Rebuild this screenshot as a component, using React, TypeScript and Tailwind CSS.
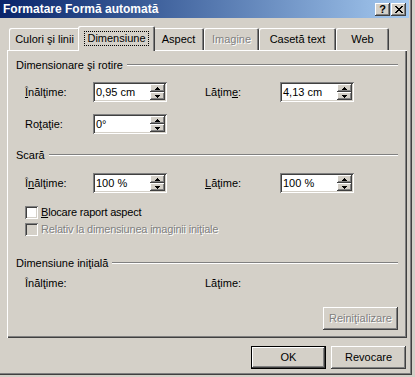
import React from "react";

const raised =
  "shadow-[inset_-1px_-1px_#404040,inset_1px_1px_#ffffff,inset_-2px_-2px_#808080,inset_2px_2px_#d4d0c8]";
const sunken =
  "shadow-[inset_1px_1px_#808080,inset_-1px_-1px_#ffffff,inset_2px_2px_#404040,inset_-2px_-2px_#d4d0c8]";
const disabledText = "text-[#808080] [text-shadow:1px_1px_0_#ffffff]";

function Arrow({ up }: { up: boolean }) {
  return (
    <svg width="5" height="3" viewBox="0 0 5 3" shapeRendering="crispEdges">
      {up ? (
        <g fill="#000">
          <rect x="2" y="0" width="1" height="1" />
          <rect x="1" y="1" width="3" height="1" />
          <rect x="0" y="2" width="5" height="1" />
        </g>
      ) : (
        <g fill="#000">
          <rect x="0" y="0" width="5" height="1" />
          <rect x="1" y="1" width="3" height="1" />
          <rect x="2" y="2" width="1" height="1" />
        </g>
      )}
    </svg>
  );
}

function Spin({ value }: { value: string }) {
  return (
    <div className={`w-[74px] h-[20px] bg-white ${sunken} p-[2px] flex`}>
      <div className="flex-1 pl-[1px] flex items-center leading-[13px] text-black">{value}</div>
      <div className="w-[15px] flex flex-col">
        <div className={`h-[8px] bg-[#d4d0c8] ${raised} flex items-center justify-center`}>
          <Arrow up />
        </div>
        <div className={`h-[8px] bg-[#d4d0c8] ${raised} flex items-center justify-center`}>
          <Arrow up={false} />
        </div>
      </div>
    </div>
  );
}

function Header({ title }: { title: string }) {
  return (
    <div className="flex items-center h-[14px] pl-[9px] pr-[9px] gap-[4px]">
      <span className="leading-[13px]">{title}</span>
      <div className="flex-1 h-[2px] border-t border-t-[#808080] border-b border-b-white" />
    </div>
  );
}

function Checkbox({ label, disabled }: { label: React.ReactNode; disabled?: boolean }) {
  return (
    <div className="flex items-center h-[13px] pl-[18px] gap-[3px]">
      <div className={`w-[13px] h-[13px] ${disabled ? "bg-[#d4d0c8]" : "bg-white"} ${sunken}`} />
      <span className={`leading-[13px] tracking-[-0.2px] ${disabled ? disabledText : ""}`}>{label}</span>
    </div>
  );
}

function Tab({
  label,
  width,
  selected,
  disabled,
}: {
  label: string;
  width: string;
  selected?: boolean;
  disabled?: boolean;
}) {
  if (selected) {
    return (
      <div
        className={`${width} h-[25px] mx-[-2px] mb-[-1px] relative z-10 bg-[#d4d0c8] rounded-t-[2px] shadow-[inset_1px_1px_#ffffff,inset_-1px_0_#404040,inset_-2px_0_#808080] flex items-start justify-center pt-[5px]`}
      >
        <span className="border border-dotted border-black px-[2px] leading-[13px]">{label}</span>
      </div>
    );
  }
  return (
    <div
      className={`${width} h-[22px] bg-[#d4d0c8] rounded-t-[2px] shadow-[inset_1px_1px_#ffffff,inset_-1px_0_#404040,inset_-2px_0_#808080] flex items-start justify-center pt-[5px]`}
    >
      <span className={`leading-[13px] ${disabled ? disabledText : ""}`}>{label}</span>
    </div>
  );
}

function Button({
  children,
  isDefault,
  disabled,
  width,
}: {
  children: React.ReactNode;
  isDefault?: boolean;
  disabled?: boolean;
  width: string;
}) {
  if (isDefault) {
    return (
      <div className={`${width} h-[23px] border border-black`}>
        <div className={`w-full h-full bg-[#d4d0c8] ${raised} flex items-center justify-center leading-[13px]`}>
          {children}
        </div>
      </div>
    );
  }
  return (
    <div
      className={`${width} h-[23px] bg-[#d4d0c8] ${raised} flex items-center justify-center leading-[13px] ${
        disabled ? disabledText : ""
      }`}
    >
      {children}
    </div>
  );
}

export default function App() {
  return (
    <div className="w-[415px] h-[377px] bg-[#d4d0c8] overflow-hidden font-['Liberation_Sans',Arial,sans-serif] text-[11px] text-black">
      <div className="w-[412px] h-[375px] shadow-[inset_-1px_-1px_#404040,inset_-2px_-2px_#808080] flex flex-col">
        {/* Title bar */}
        <div className="h-[18px] mr-[3px] bg-gradient-to-r from-[#0a246a] to-[#a6caf0] flex items-center pl-[3px] pr-[3px]">
          <span className="text-white font-bold text-[12px] leading-[14px] flex-1">Formatare Formă automată</span>
          <div className="flex gap-[1px]">
            <div className={`w-[15px] h-[13px] bg-[#d4d0c8] ${raised} flex items-center justify-center`}>
              <span className="font-bold text-[11px] leading-[11px] text-black">?</span>
            </div>
            <div className={`w-[15px] h-[13px] bg-[#d4d0c8] ${raised} flex items-center justify-center`}>
              <svg width="8" height="7" viewBox="0 0 8 7" shapeRendering="crispEdges">
                <g fill="#000">
                  <rect x="0" y="0" width="2" height="1" />
                  <rect x="6" y="0" width="2" height="1" />
                  <rect x="1" y="1" width="2" height="1" />
                  <rect x="5" y="1" width="2" height="1" />
                  <rect x="2" y="2" width="4" height="1" />
                  <rect x="3" y="3" width="2" height="1" />
                  <rect x="2" y="4" width="4" height="1" />
                  <rect x="1" y="5" width="2" height="1" />
                  <rect x="5" y="5" width="2" height="1" />
                  <rect x="0" y="6" width="2" height="1" />
                  <rect x="6" y="6" width="2" height="1" />
                </g>
              </svg>
            </div>
          </div>
        </div>

        {/* Tabs */}
        <div className="mt-[8px] h-[24px] flex items-end pl-[9px]">
          <Tab label="Culori şi linii" width="w-[71px]" />
          <Tab label="Dimensiune" width="w-[77px]" selected />
          <Tab label="Aspect" width="w-[51px]" />
          <Tab label="Imagine" width="w-[55px]" disabled />
          <Tab label="Casetă text" width="w-[77px]" />
          <Tab label="Web" width="w-[53px]" />
        </div>

        {/* Panel */}
        <div className="ml-[7px] w-[400px] h-[288px] bg-[#d4d0c8] shadow-[inset_1px_1px_#ffffff,inset_-1px_-1px_#404040,inset_-2px_-2px_#808080] flex flex-col pt-[8px]">
          <Header title="Dimensionare şi rotire" />

          <div className="mt-[10px] flex items-center pl-[18px] h-[20px]">
            <span className="w-[68px] leading-[13px]">
              <u>Î</u>nălţime:
            </span>
            <Spin value="0,95 cm" />
            <div className="w-[38px]" />
            <span className="w-[75px] leading-[13px]">
              Lăţim<u>e</u>:
            </span>
            <Spin value="4,13 cm" />
          </div>

          <div className="mt-[12px] flex items-center pl-[18px] h-[20px]">
            <span className="w-[68px] leading-[13px]">
              Ro<u>ţ</u>aţie:
            </span>
            <Spin value="0°" />
          </div>

          <div className="mt-[14px]">
            <Header title="Scară" />
          </div>

          <div className="mt-[11px] flex items-center pl-[18px] h-[20px]">
            <span className="w-[68px] leading-[13px]">
              Î<u>n</u>ălţime:
            </span>
            <Spin value="100 %" />
            <div className="w-[38px]" />
            <span className="w-[75px] leading-[13px]">
              <u>L</u>ăţime:
            </span>
            <Spin value="100 %" />
          </div>

          <div className="mt-[13px]">
            <Checkbox
              label={
                <>
                  <u>B</u>locare raport aspect
                </>
              }
            />
          </div>
          <div className="mt-[4px]">
            <Checkbox label="Relativ la dimensiunea imaginii iniţiale" disabled />
          </div>

          <div className="mt-[20px]">
            <Header title="Dimensiune iniţială" />
          </div>

          <div className="mt-[6px] flex items-center pl-[18px] h-[14px]">
            <span className="w-[180px] leading-[13px]">Înălţime:</span>
            <span className="leading-[13px]">Lăţime:</span>
          </div>

          <div className="mt-[17px] flex justify-end pr-[9px]">
            <Button width="w-[75px]" disabled>
              Reiniţializare
            </Button>
          </div>
        </div>

        {/* Bottom buttons */}
        <div className="mt-[8px] flex gap-[5px] ml-[251px]">
          <Button width="w-[75px]" isDefault>
            OK
          </Button>
          <Button width="w-[75px]">Revocare</Button>
        </div>
      </div>
    </div>
  );
}
